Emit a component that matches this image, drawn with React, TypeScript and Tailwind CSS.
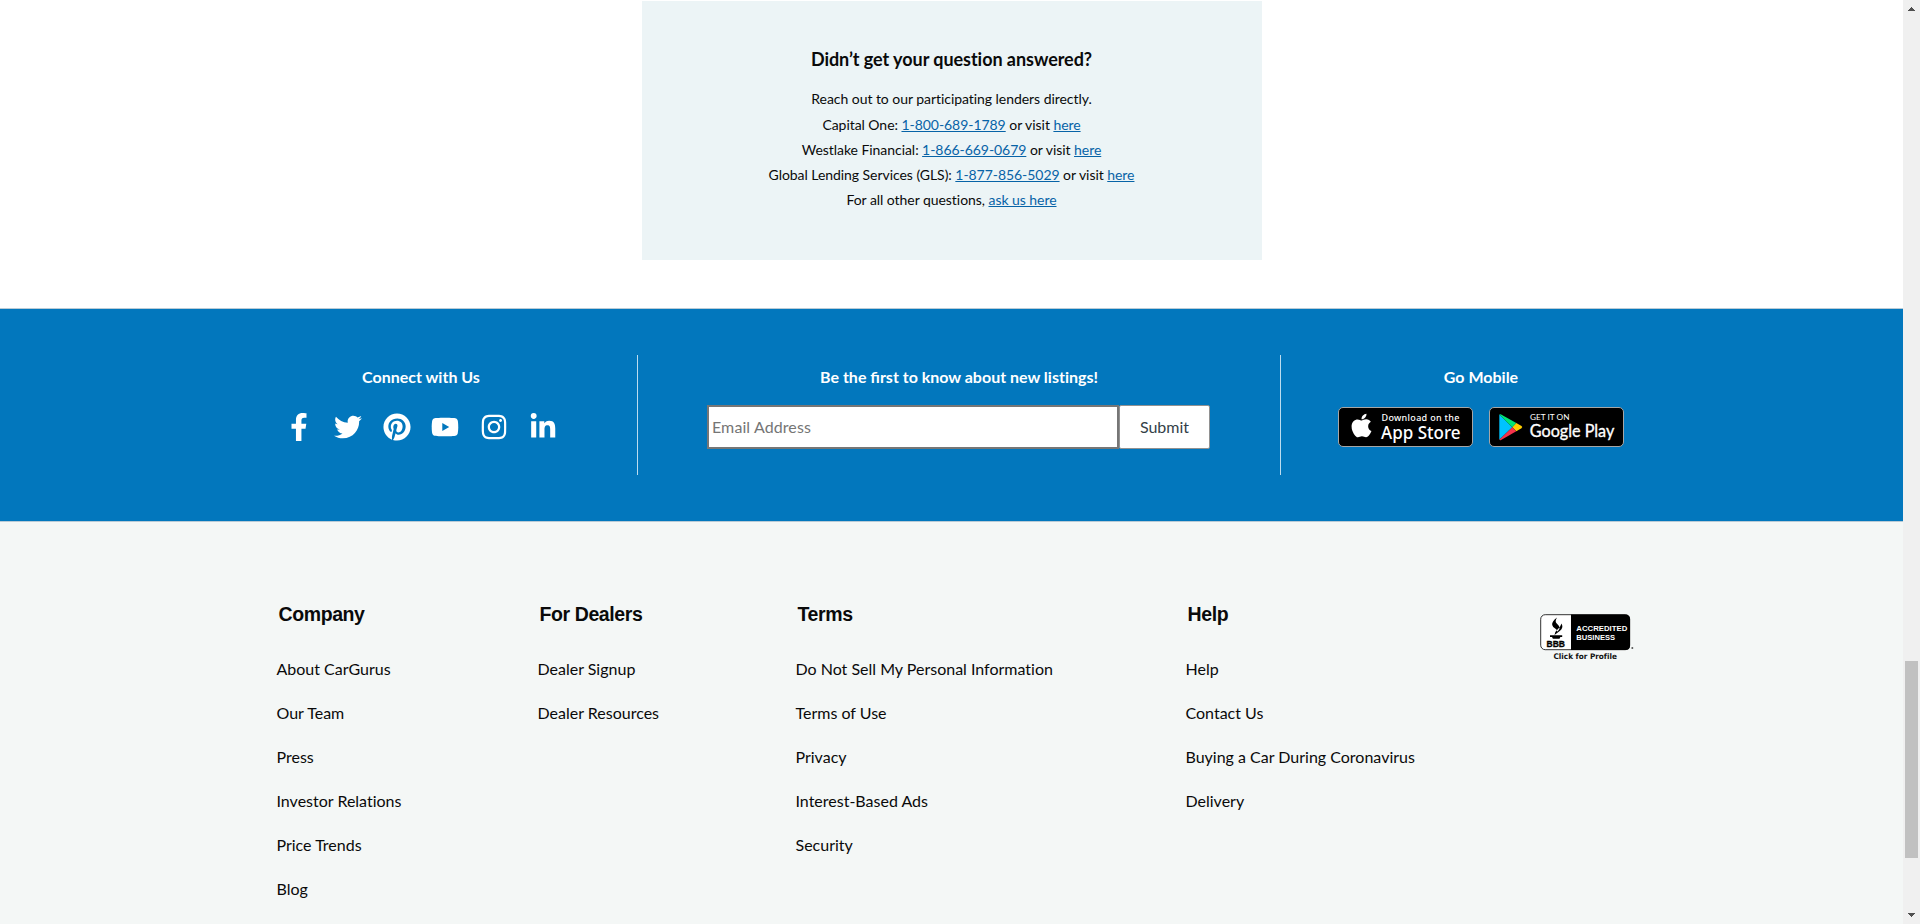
import React from "react";
import { FaApple, FaFacebookF, FaInstagram, FaLinkedinIn, FaPinterest, FaTwitter, FaYoutube } from "react-icons/fa";

const link = "text-[#0763a7] underline";

const lenders = [
  { name: "Capital One", phone: "1-800-689-1789" },
  { name: "Westlake Financial", phone: "1-866-669-0679" },
  { name: "Global Lending Services (GLS)", phone: "1-877-856-5029" },
];

const columns = [
  { title: "Company", width: "w-[261px]", items: ["About CarGurus", "Our Team", "Press", "Investor Relations", "Price Trends", "Blog"] },
  { title: "For Dealers", width: "w-[258px]", items: ["Dealer Signup", "Dealer Resources"] },
  { title: "Terms", width: "w-[390px]", items: ["Do Not Sell My Personal Information", "Terms of Use", "Privacy", "Interest-Based Ads", "Security"] },
  { title: "Help", width: "w-[354px]", items: ["Help", "Contact Us", "Buying a Car During Coronavirus", "Delivery"] },
];

const socials = [FaFacebookF, FaTwitter, FaPinterest, FaYoutube, FaInstagram, FaLinkedinIn];

function Questions() {
  return (
    <section className="flex h-[308px] shrink-0 justify-center pt-px">
      <div className="flex h-[259px] w-[620px] flex-col items-center bg-[#ecf4f6] pt-[46px] text-sm leading-[25px] tracking-[-0.05px]">
        <h2 className="mb-[15px] text-[18px] leading-6 font-bold">Didn’t get your question answered?</h2>
        <p className="mb-px">Reach out to our participating lenders directly.</p>
        {lenders.map((l) => (
          <p key={l.name}>
            {l.name}: <a className={link}>{l.phone}</a> or visit <a className={link}>here</a>
          </p>
        ))}
        <p>
          For all other questions, <a className={link}>ask us here</a>
        </p>
      </div>
    </section>
  );
}

function AppStoreBadge() {
  return (
    <div className="flex h-10 w-[135px] items-center rounded-[5px] border border-[#a6a6a6] bg-black pl-[8.5px]">
      <FaApple className="-mt-1 shrink-0 text-white" size={27} />
      <svg className="h-[38px] w-[92px] shrink-0" viewBox="0 0 92 38" fill="#fff" fontFamily="'Noto Sans', sans-serif">
        <text x="6.5" y="12.5" fontSize="9" fontWeight="500" textLength="78" lengthAdjust="spacing">Download on the</text>
        <text x="6" y="31" fontSize="18" fontWeight="500" textLength="79.5" lengthAdjust="spacingAndGlyphs">App Store</text>
      </svg>
    </div>
  );
}

function GooglePlayBadge() {
  return (
    <div className="flex h-10 w-[135px] items-center rounded-[5px] border border-[#a6a6a6] bg-black">
      <svg className="h-[38px] w-[133px]" viewBox="0 0 133 38" fill="#fff" fontFamily="Lato, sans-serif">
        <path d="M9.3 6.6v25.2L22.3 19.2z" fill="#00c3ff" />
        <path d="M9.3 6.6q.7-.8 1.8-.2l15.2 8.7-4 4.1z" fill="#00e676" />
        <path d="M26.3 15.1l5.2 3q1.5 1.1 0 2.2l-5.2 3-4-4.1z" fill="#ffce00" />
        <path d="M9.3 31.8q.7.8 1.8.2l15.2-8.7-4-4.1z" fill="#f5334b" />
        <text x="40" y="12" fontSize="7.4" textLength="39.5" lengthAdjust="spacingAndGlyphs">GET IT ON</text>
        <text x="39.8" y="29.3" fontSize="18" textLength="84.5" lengthAdjust="spacingAndGlyphs" stroke="#fff" strokeWidth=".35">Google Play</text>
      </svg>
    </div>
  );
}

function ConnectBar() {
  return (
    <section className="flex h-[214px] shrink-0 border-y border-[#b9cbd6] bg-[#0277bd] pt-[46px] pl-[205px] text-base leading-6 text-white">
      <div className="flex h-[120px] w-[433px] flex-col items-center border-r border-[#bcdcef] pt-[10px]">
        <h3 className="font-bold">Connect with Us</h3>
        <div className="mt-6 flex gap-[20.8px]">
          {socials.map((Icon, i) => (
            <Icon key={i} size={28} />
          ))}
        </div>
      </div>
      <div className="flex h-[120px] w-[643px] flex-col items-center border-r border-[#bcdcef] pt-[10px]">
        <h3 className="font-bold">
          Be the <span className="[font-variant-ligatures:normal]">first</span> to know about new listings!
        </h3>
        <form className="mt-4 mr-px flex h-11 w-[503px]">
          <input
            className="w-[412px] border-2 border-[#767676] bg-white pl-[3px] text-base tracking-[0.1px] text-black placeholder:text-[#757575]"
            placeholder="Email Address"
          />
          <button type="button" className="flex-1 rounded-[2px] border border-[#919191] bg-white text-[#333f48]">
            Submit
          </button>
        </form>
      </div>
      <div className="flex w-[400px] flex-col items-center pt-[10px]">
        <h3 className="font-bold">Go Mobile</h3>
        <div className="mt-[18px] flex gap-4">
          <AppStoreBadge />
          <GooglePlayBadge />
        </div>
      </div>
    </section>
  );
}

function BbbSeal() {
  return (
    <svg className="mt-[92px] h-[50px] w-24" viewBox="0 0 96 50">
      <rect x=".7" y=".7" width="89" height="35" rx="4.5" fill="#fff" stroke="#333" strokeWidth="1" />
      <path d="M31 .5H85.500q4.500 0 4.500 4.500v26.500q0 4.500-4.500 4.500H31z" fill="#000" />
      <path d="M17 3.500q-5.500 4-4.800 7.500.5 2.300 3.300 3.800 2 1.200 1.500 3 4-3 1.800-6-1-1.300-2.500-2.700-1.500-2 .7-5.600zM21.500 9.500q2.200 4.300-1.500 7.300l-5.500 4.200q0-3 3-5.500 3-2.500 4-6zM10 21.300h12.200v1.700h-1.800l-.9 1.700h-6.600l-.9-1.700h-2z" fill="#000" />
      <text x="6.500" y="32.600" fontFamily="'Liberation Sans', sans-serif" fontWeight="700" fontSize="9" textLength="18.500" lengthAdjust="spacingAndGlyphs" stroke="#000" strokeWidth=".3">BBB</text>
      <g fill="#fff" fontFamily="'Liberation Sans', sans-serif" fontWeight="700" fontSize="8.100">
        <text x="36.300" y="17" textLength="51" lengthAdjust="spacingAndGlyphs">ACCREDITED</text>
        <text x="36.300" y="26.400" textLength="38.800" lengthAdjust="spacingAndGlyphs">BUSINESS</text>
      </g>
      <circle cx="92.300" cy="34" r="1" fill="#555" />
      <text x="13.500" y="44.800" fontFamily="'DejaVu Sans', sans-serif" fontWeight="700" fontSize="7.700" textLength="63.500" lengthAdjust="spacingAndGlyphs" fill="#111">Click for Profile</text>
    </svg>
  );
}

function Footer() {
  return (
    <footer className="flex min-h-0 flex-1 bg-[#f4f7f6] pl-[277px]">
      {columns.map((c) => (
        <div key={c.title} className={`${c.width} shrink-0 pt-20`}>
          <h3 className="ml-[1.500px] text-[19.500px] leading-6 font-bold tracking-[-0.4px] [font-family:'Liberation_Sans',sans-serif]">
            {c.title}
          </h3>
          <ul className="-ml-[0.500px] mt-[31px] text-base leading-6">
            {c.items.map((item) => (
              <li key={item} className="mb-5">
                {item}
              </li>
            ))}
          </ul>
        </div>
      ))}
      <BbbSeal />
    </footer>
  );
}

function Scrollbar() {
  return (
    <div className="flex w-[17px] flex-col items-center bg-[#f0f0f0]">
      <svg className="mt-[7px] h-1 w-[7px]" viewBox="0 0 7 4" shapeRendering="crispEdges">
        <path d="M3 0h1v1h1v1h1v1h1v1H0V3h1V2h1V1h1z" fill="#505050" />
      </svg>
      <div className="mt-[650px] h-[197px] w-[13px] bg-[#c1c1c1]" />
      <svg className="mt-[55px] h-1 w-[7px]" viewBox="0 0 7 4" shapeRendering="crispEdges">
        <path d="M3 4h1V3h1V2h1V1h1V0H0v1h1v1h1v1h1z" fill="#505050" />
      </svg>
    </div>
  );
}

export default function App() {
  return (
    <div className="flex h-[924px] w-[1920px] overflow-hidden bg-white text-[#0a0a0a] [font-family:Lato,sans-serif] [font-variant-ligatures:none]">
      <main className="flex min-w-0 flex-1 flex-col">
        <Questions />
        <ConnectBar />
        <Footer />
      </main>
      <Scrollbar />
    </div>
  );
}
